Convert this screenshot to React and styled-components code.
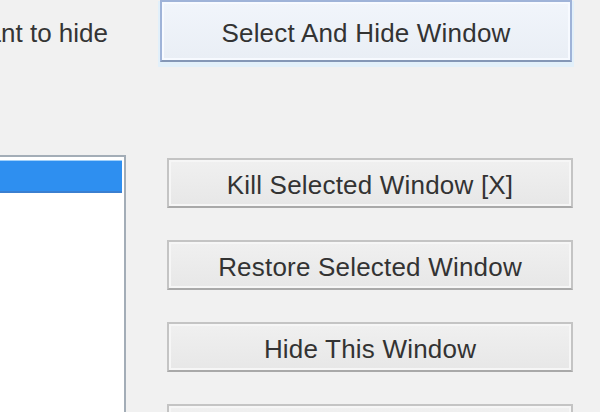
import React from "react";
import styled, { createGlobalStyle } from "styled-components";

const Global = createGlobalStyle`
  html, body {
    margin: 0;
    padding: 0;
    background: #f1f1f1;
  }
  body {
    font-family: "Liberation Sans", Arial, sans-serif;
    overflow: hidden;
  }
`;

const Page = styled.div`
  width: 600px;
  height: 412px;
  overflow: hidden;
  display: flex;
  flex-direction: column;
  background: #f1f1f1;
`;

const TopRow = styled.div`
  height: 62px;
  display: flex;
  align-items: center;
  gap: 52px;
`;

/* label is cut at the left edge, only the end shows */
const Label = styled.div`
  width: 108px;
  overflow: hidden;
  display: flex;
  justify-content: flex-end;
  white-space: nowrap;
  font-size: 26px;
  color: #353535;
  padding-top: 4px;
`;

const Button = styled.div`
  box-sizing: border-box;
  width: ${(p) => p.$width}px;
  height: ${(p) => p.$height || 50}px;
  flex-shrink: 0;
  display: flex;
  align-items: center;
  justify-content: center;
  padding-top: 5px;
  font-size: 26px;
  letter-spacing: 0.2px;
  color: #333333;
  white-space: nowrap;
  border: 2px solid ${(p) => (p.$focus ? "#9fb3d8" : "#c4c4c4")};
  border-bottom-color: ${(p) => (p.$focus ? "#8497b6" : "#a9a9a9")};
  background: ${(p) =>
    p.$focus
      ? "linear-gradient(#f1f5fb, #e9eef5)"
      : "linear-gradient(#f0f0f0, #e7e7e7)"};
  box-shadow: ${(p) =>
    p.$focus
      ? "inset 0 0 0 2px #f7faff, 0 3px 0 2px #e2f0fa"
      : "inset 0 0 0 2px #f6f6f6"};
`;

const Bottom = styled.div`
  display: flex;
  margin-top: 93px;
  flex: 1;
  min-height: 0;
`;

const ListBox = styled.div`
  box-sizing: border-box;
  margin-left: -20px;
  width: 146px;
  height: 300px;
  background: #ffffff;
  border: 2px solid #a3adb7;
  border-left: none;
  padding-top: 3px;
  flex-shrink: 0;
`;

const ListRow = styled.div`
  height: 30px;
  margin-right: 2px;
  background: ${(p) => (p.$selected ? "#2e8ff0" : "transparent")};
  border-top: 1px solid ${(p) => (p.$selected ? "#9fd0fb" : "transparent")};
  border-bottom: 2px solid ${(p) => (p.$selected ? "#3a7fd0" : "transparent")};
`;

const ButtonColumn = styled.div`
  display: flex;
  flex-direction: column;
  gap: 32px;
  padding-top: 3px;
  margin-left: 41px;
`;

export default function App() {
  return (
    <Page>
      <Global />
      <TopRow>
        <Label>Select the window you want to hide</Label>
        <Button $width={412} $height={62} $focus>
          Select And Hide Window
        </Button>
      </TopRow>
      <Bottom>
        <ListBox>
          <ListRow $selected />
        </ListBox>
        <ButtonColumn>
          <Button $width={406}>Kill Selected Window [X]</Button>
          <Button $width={406}>Restore Selected Window</Button>
          <Button $width={406}>Hide This Window</Button>
          <Button $width={406} />
        </ButtonColumn>
      </Bottom>
    </Page>
  );
}
